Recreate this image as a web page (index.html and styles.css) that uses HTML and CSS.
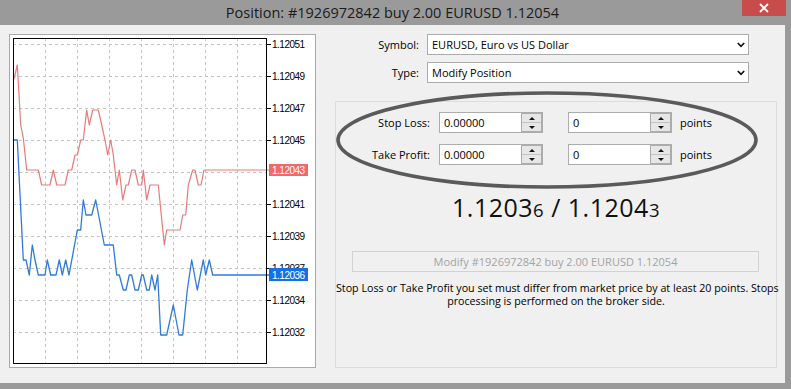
FILE: index.html
```html
<!DOCTYPE html>
<html>
<head>
<meta charset="utf-8">
<title>Position</title>
<link rel="stylesheet" href="styles.css">
</head>
<body>
<div class="titlebar">
  <div class="title">Position: #1926972842 buy 2.00 EURUSD 1.12054</div>
  <div class="close"><svg width="10" height="10" viewBox="0 0 10 10"><path d="M1 1 L9 9 M9 1 L1 9" stroke="#fff" stroke-width="1.8"/></svg></div>
</div>
<div class="client">
  <div class="chart-panel">
    <svg class="chart" width="305" height="332" viewBox="10 35 305 332">
      <g class="grid" stroke="#c4c4c4" stroke-width="1" stroke-dasharray="3,3">
        <path d="M45.5 38 V364 M77.5 38 V364 M109.5 38 V364 M141.5 38 V364 M173.5 38 V364 M205.5 38 V364 M237.5 38 V364"/>
        <path d="M13 44.5 H267 M13 76.5 H267 M13 108.5 H267 M13 140.5 H267 M13 172.5 H267 M13 204.5 H267 M13 236.5 H267 M13 268.5 H267 M13 300.5 H267 M13 332.5 H267"/>
      </g>
      <g stroke="#000" stroke-width="1">
        <path d="M267 44.5 H271 M267 76.5 H271 M267 108.5 H271 M267 140.5 H271 M267 204.5 H271 M267 236.5 H271 M267 268.5 H271 M267 300.5 H271 M267 332.5 H271"/>
      </g>
      <g class="axis-labels">
        <text x="272" y="48">1.12051</text>
        <text x="272" y="80">1.12049</text>
        <text x="272" y="112">1.12047</text>
        <text x="272" y="144">1.12045</text>
        <text x="272" y="208">1.12041</text>
        <text x="272" y="240">1.12039</text>
        <text x="272" y="272">1.12037</text>
        <text x="272" y="304">1.12034</text>
        <text x="272" y="336">1.12032</text>
      </g>
      <polyline fill="none" stroke="#e87a7a" stroke-width="1.2" stroke-linejoin="round" points="14,79 17.3,65 20.7,125 23.3,138 26.7,170 38.3,170 41.7,185 50,185 53.3,170 56.7,185 65,185 68.3,170 71.7,170 75,155 77.3,155 80.7,140 83.3,140 86.7,110 89.3,125 92.7,110 98.3,110 101.7,125 105,140 107.7,155 110.7,140 113.3,155 116.7,185 119.3,170 122.7,200 126,185 128.3,185 131.7,170 135,170 138.3,185 141.7,185 143.3,170 146.7,200 150,185 158.3,185 164.3,245 166.7,230 180,230 182.7,215 185.7,215 188.3,185 192.7,170 195,170 198.3,185 201,185 204,170 269,170"/>
      <polyline fill="none" stroke="#2f7bd9" stroke-width="1.3" stroke-linejoin="round" points="13.5,140 17.3,140 23.3,260 26,260 29.3,275 32.3,245 35,260 38.3,275 45,275 47.3,260 50.7,275 56,275 59.3,260 62.3,275 65.7,260 69,275 77.3,230 80.7,230 83.3,200 86,215 91.7,215 95.7,200 104.3,245 113.3,245 116.7,275 119.3,275 123.3,290 126,290 129.3,275 131.7,275 135,290 138.3,290 141.7,275 143.3,275 146.7,290 149.3,290 151.7,275 155,290 157.7,275 160.7,335 166.7,335 173.3,305 179,335 182.7,335 187.3,290 191.7,260 197.3,290 203.3,260 205.7,275 209.3,260 212.7,275 269,275"/>
      <rect x="13.5" y="38.5" width="253" height="325" fill="none" stroke="#000" stroke-width="1"/>
      <rect x="269" y="164" width="39" height="12" fill="#f06868"/>
      <text class="tag" x="272" y="174">1.12043</text>
      <rect x="269" y="268" width="39" height="13" fill="#1570e6"/>
      <text class="tag" x="272" y="278.5">1.12036</text>
    </svg>
  </div>
  <div class="form">
    <div class="row">
      <span class="lbl">Symbol:</span>
      <div class="select"><span>EURUSD, Euro vs US Dollar</span><svg width="8" height="6" viewBox="0 0 8 6"><polyline points="0.8,1 4,4.3 7.2,1" fill="none" stroke="#111" stroke-width="1.7"/></svg></div>
    </div>
    <div class="row">
      <span class="lbl">Type:</span>
      <div class="select"><span>Modify Position</span><svg width="8" height="6" viewBox="0 0 8 6"><polyline points="0.8,1 4,4.3 7.2,1" fill="none" stroke="#111" stroke-width="1.7"/></svg></div>
    </div>
    <div class="group">
      <svg class="ring" width="430" height="106" viewBox="0 0 430 106"><ellipse cx="214" cy="53" rx="209" ry="47" fill="none" stroke="#5a5a5c" stroke-width="3.6"/></svg>
      <div class="lvl-row">
        <span class="lbl2">Stop Loss:</span>
        <div class="spin"><span>0.00000</span><div class="spin-btn"><i class="up"></i><i class="down"></i></div></div>
        <div class="spin second"><span>0</span><div class="spin-btn"><i class="up"></i><i class="down"></i></div></div>
        <span class="pts">points</span>
      </div>
      <div class="lvl-row">
        <span class="lbl2">Take Profit:</span>
        <div class="spin"><span>0.00000</span><div class="spin-btn"><i class="up"></i><i class="down"></i></div></div>
        <div class="spin second"><span>0</span><div class="spin-btn"><i class="up"></i><i class="down"></i></div></div>
        <span class="pts">points</span>
      </div>
      <div class="price">1.1203<small>6</small> / 1.1204<small>3</small></div>
      <div class="btn">Modify #1926972842 buy 2.00 EURUSD 1.12054</div>
      <div class="info">
        <div>Stop Loss or Take Profit you set must differ from market price by at least 20 points. Stops</div>
        <div>processing is performed on the broker side.</div>
      </div>
    </div>
  </div>
</div>
</body>
</html>
```

FILE: styles.css
```css
* { box-sizing: border-box; }
html, body { margin: 0; padding: 0; }
body {
  width: 791px;
  height: 389px;
  overflow: hidden;
  background: #9a9a9a;
  font-family: "Open Sans", "Noto Sans", sans-serif;
  color: #000;
}
.titlebar {
  height: 25px;
  position: relative;
  display: flex;
  align-items: center;
  justify-content: center;
  padding-right: 6px;
}
.title {
  font-size: 14.5px;
  line-height: 25px;
  color: #1b1b1b;
}
.close {
  position: absolute;
  top: 0;
  right: 5px;
  width: 44px;
  height: 16px;
  background: #c84c4c;
  display: flex;
  align-items: center;
  justify-content: center;
}
.client {
  width: 785px;
  height: 358px;
  background: #f0f0f0;
  display: flex;
  align-items: flex-start;
  padding: 9px 0 0 9px;
}
.chart-panel {
  width: 307px;
  height: 334px;
  background: #fff;
  border: 1px solid #a9a9a9;
}
.chart { display: block; }
.axis-labels text, .tag {
  font-family: "Liberation Sans", Arial, sans-serif;
  font-size: 10px;
  letter-spacing: -0.5px;
  fill: #000;
}
.tag { fill: #fff; }
.form {
  margin-left: 19px;
  width: 442px;
  display: flex;
  flex-direction: column;
}
.row {
  display: flex;
  align-items: center;
  height: 21px;
}
.row + .row { margin-top: 7px; }
.lbl {
  width: 84px;
  margin-right: 8px;
  text-align: right;
  font-size: 11px;
}
.select {
  width: 322px;
  height: 21px;
  background: #fff;
  border: 1px solid #acacac;
  display: flex;
  align-items: center;
  justify-content: space-between;
  padding: 0 3px 0 4px;
  font-size: 11px;
}
.select svg { display: block; }
.group {
  position: relative;
  margin-top: 18px;
  height: 267px;
  border: 1px solid #dcdcdc;
  padding-top: 10px;
  display: flex;
  flex-direction: column;
}
.ring {
  position: absolute;
  left: -3px;
  top: -15px;
  pointer-events: none;
}
.lvl-row {
  display: flex;
  align-items: center;
  height: 21px;
}
.lvl-row + .lvl-row { margin-top: 11px; }
.lbl2 {
  width: 94px;
  margin-right: 9px;
  text-align: right;
  font-size: 11px;
}
.spin {
  width: 104px;
  height: 21px;
  background: #fff;
  border: 1px solid #acacac;
  display: flex;
  align-items: center;
  justify-content: space-between;
  padding-left: 4px;
  font-size: 11px;
}
.spin.second { margin-left: 25px; }
.spin-btn {
  width: 21px;
  height: 19px;
  border: 1px solid #acacac;
  background: #e6e6e6;
  display: flex;
  flex-direction: column;
}
.spin-btn i {
  flex: 1;
  display: flex;
  align-items: center;
  justify-content: center;
}
.spin-btn .up { border-bottom: 1px solid #c4c4c4; }
.spin-btn .up::after {
  content: "";
  border-left: 3px solid transparent;
  border-right: 3px solid transparent;
  border-bottom: 3px solid #111;
}
.spin-btn .down::after {
  content: "";
  border-left: 3px solid transparent;
  border-right: 3px solid transparent;
  border-top: 3px solid #111;
}
.pts {
  margin-left: 8px;
  font-size: 11px;
}
.price {
  margin-top: 27px;
  text-align: center;
  font-size: 25px;
  line-height: 30px;
  letter-spacing: 0.5px;
  color: #111;
}
.price small { font-size: 18.5px; }
.btn {
  margin: 26px 17px 0 16px;
  height: 21px;
  border: 1px solid #d2d2d2;
  display: flex;
  align-items: center;
  justify-content: center;
  font-size: 11px;
  color: #a3a3a3;
}
.info {
  margin-top: 10px;
  text-align: center;
  font-size: 10.7px;
  line-height: 13px;
  white-space: nowrap;
}
.info div { height: 13px; }
```
